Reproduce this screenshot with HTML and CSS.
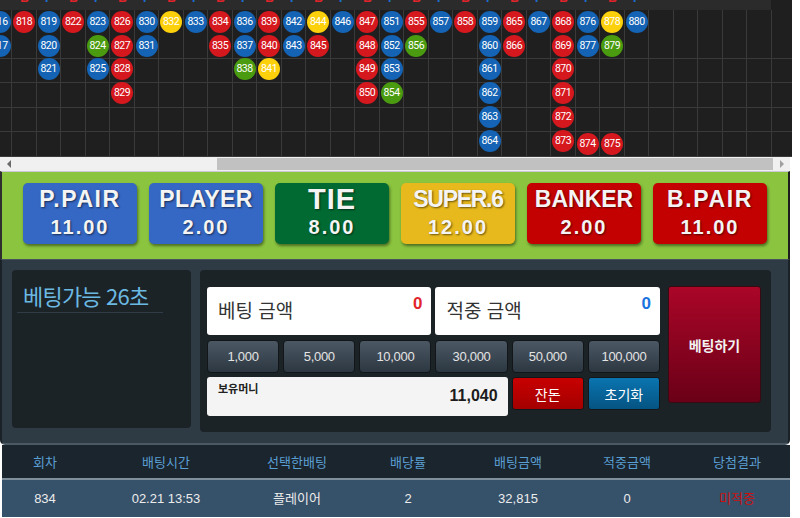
FILE: index.html
```html
<!DOCTYPE html>
<html lang="ko">
<head>
<meta charset="utf-8">
<link rel="stylesheet" href="styles.css">
</head>
<body>
<div class="app">
  <div class="road">
    <div class="strip">
      <div class="strip-inner">
        <span></span><span class="mr">B</span><span class="mb">P</span><span class="mr">B</span><span class="mb">P</span><span class="mr">B</span><span class="mb">P</span><span class="mr">B</span><span class="mb">P</span><span class="mr">B</span><span class="mb">P</span><span class="mr">B</span><span class="mb">P</span><span class="mr">B</span><span class="mb">P</span><span class="mr">B</span><span class="mb">P</span><span class="mr">B</span><span class="mb">P</span><span class="mr">B</span><span class="mb">P</span><span class="mr">B</span><span class="mb">P</span><span class="mr">B</span><span class="mb">P</span><span class="mr">B</span><span class="mb">P</span>
      </div>
    </div>
    <div class="cols">
      <div class="col"><i class="b bl">816</i><i class="b bl">817</i></div>
      <div class="col"><i class="b rd">818</i></div>
      <div class="col"><i class="b bl">819</i><i class="b bl">820</i><i class="b bl">821</i></div>
      <div class="col"><i class="b rd">822</i></div>
      <div class="col"><i class="b bl">823</i><i class="b gr">824</i><i class="b bl">825</i></div>
      <div class="col"><i class="b rd">826</i><i class="b rd">827</i><i class="b rd">828</i><i class="b rd">829</i></div>
      <div class="col"><i class="b bl">830</i><i class="b bl">831</i></div>
      <div class="col"><i class="b yl">832</i></div>
      <div class="col"><i class="b bl">833</i></div>
      <div class="col"><i class="b rd">834</i><i class="b rd">835</i></div>
      <div class="col"><i class="b bl">836</i><i class="b bl">837</i><i class="b gr">838</i></div>
      <div class="col"><i class="b rd">839</i><i class="b rd">840</i><i class="b yl">841</i></div>
      <div class="col"><i class="b bl">842</i><i class="b bl">843</i></div>
      <div class="col"><i class="b yl">844</i><i class="b rd">845</i></div>
      <div class="col"><i class="b bl">846</i></div>
      <div class="col"><i class="b rd">847</i><i class="b rd">848</i><i class="b rd">849</i><i class="b rd">850</i></div>
      <div class="col"><i class="b bl">851</i><i class="b bl">852</i><i class="b bl">853</i><i class="b gr">854</i></div>
      <div class="col"><i class="b rd">855</i><i class="b gr">856</i></div>
      <div class="col"><i class="b bl">857</i></div>
      <div class="col"><i class="b rd">858</i></div>
      <div class="col"><i class="b bl">859</i><i class="b bl">860</i><i class="b bl">861</i><i class="b bl">862</i><i class="b bl">863</i><i class="b bl">864</i></div>
      <div class="col"><i class="b rd">865</i><i class="b rd">866</i></div>
      <div class="col"><i class="b bl">867</i></div>
      <div class="col"><i class="b rd">868</i><i class="b rd">869</i><i class="b rd">870</i><i class="b rd">871</i><i class="b rd">872</i><i class="b rd">873</i></div>
      <div class="col"><i class="b bl">876</i><i class="b bl">877</i><i class="e"></i><i class="e"></i><i class="e"></i><i class="b rd">874</i></div>
      <div class="col"><i class="b yl">878</i><i class="b gr">879</i><i class="e"></i><i class="e"></i><i class="e"></i><i class="b rd">875</i></div>
      <div class="col"><i class="b bl">880</i></div>
      <div class="col"></div>
      <div class="col"></div>
      <div class="col"></div>
      <div class="col"></div>
      <div class="col"></div>
      <div class="col"></div>
    </div>
  </div>
  <div class="hscroll">
    <div class="arrow"><span class="tri-l"></span></div>
    <div class="track"><div class="thumb"></div></div>
    <div class="arrow"><span class="tri-r"></span></div>
  </div>

  <div class="bets">
    <div class="bet c-blue"><div class="name wide">P.PAIR</div><div class="odd">11.00</div></div>
    <div class="bet c-blue"><div class="name mid">PLAYER</div><div class="odd">2.00</div></div>
    <div class="bet c-green tie"><div class="name">TIE</div><div class="odd">8.00</div></div>
    <div class="bet c-yellow"><div class="name narrow">SUPER.6</div><div class="odd">12.00</div></div>
    <div class="bet c-red"><div class="name">BANKER</div><div class="odd">2.00</div></div>
    <div class="bet c-red"><div class="name wide">B.PAIR</div><div class="odd">11.00</div></div>
  </div>

  <div class="console">
    <div class="timer">
      <div class="timer-text">베팅가능 26초</div>
    </div>
    <div class="betbox">
      <div class="form">
        <div class="field span3"><span class="flabel">베팅 금액</span><span class="fval red">0</span></div>
        <div class="field span3"><span class="flabel">적중 금액</span><span class="fval blue">0</span></div>
        <button class="chip">1,000</button>
        <button class="chip">5,000</button>
        <button class="chip">10,000</button>
        <button class="chip">30,000</button>
        <button class="chip">50,000</button>
        <button class="chip">100,000</button>
        <div class="money span4"><span class="mlabel">보유머니</span><span class="mval">11,040</span></div>
        <button class="act act-red">잔돈</button>
        <button class="act act-blue">초기화</button>
      </div>
      <button class="go">베팅하기</button>
    </div>
  </div>

  <div class="history">
    <div class="hrow head">
      <span>회차</span><span>배팅시간</span><span>선택한배팅</span><span>배당률</span><span>배팅금액</span><span>적중금액</span><span>당첨결과</span>
    </div>
    <div class="hrow data">
      <span>834</span><span>02.21 13:53</span><span>플레이어</span><span>2</span><span>32,815</span><span>0</span><span class="miss">미적중</span>
    </div>
  </div>
</div>
</body>
</html>
```
FILE: styles.css
```css
* { box-sizing: border-box; }
body {
  margin: 0;
  background: #ffffff;
  font-family: "Liberation Sans", "Noto Sans CJK KR", sans-serif;
}
.app { width: 790px; }

/* bead road */
.road {
  width: 792px;
  height: 157px;
  background: #1f1f1f;
  overflow: hidden;
}
.strip {
  width: 771px;
  height: 10px;
  background: #2b2b2b;
  overflow: hidden;
}
.strip-inner {
  display: flex;
  margin-left: -12.25px;
}
.strip-inner span {
  flex: 0 0 24.5px;
  text-align: center;
  font: bold 12px/12px "Liberation Sans", sans-serif;
  margin-top: -8px;
}
.mr { color: #e0242a; }
.mb { color: #1d6fd2; }
.cols {
  display: flex;
  margin-left: -12.25px;
  height: 147px;
}
.col {
  flex: 0 0 24.5px;
  border-right: 1px solid #3a3a3a;
  background: repeating-linear-gradient(to bottom, #1f1f1f 0 23.5px, #3a3a3a 23.5px 24.5px);
}
.b, .e { display: block; font-style: normal; }
.e { height: 24.5px; }
.b {
  width: 22px;
  height: 22px;
  margin: 0.75px auto 1.75px;
  border-radius: 50%;
  color: #fff;
  font: 10.5px/22px "Roboto", "Liberation Sans", sans-serif;
  letter-spacing: -0.5px;
  text-align: center;
}
.rd { background: #d5181e; }
.bl { background: #1463b4; }
.yl { background: #fdd00c; }
.gr { background: #4b9b10; }

/* scrollbar */
.hscroll {
  width: 790px;
  height: 14px;
  background: #f0f0f0;
  display: flex;
  align-items: center;
}
.arrow {
  flex: 0 0 17px;
  display: flex;
  justify-content: center;
  align-items: center;
}
.tri-l {
  width: 0; height: 0;
  border-top: 4px solid transparent;
  border-bottom: 4px solid transparent;
  border-right: 4px solid #6a6a6a;
}
.tri-r {
  width: 0; height: 0;
  border-top: 4px solid transparent;
  border-bottom: 4px solid transparent;
  border-left: 4px solid #a0a0a0;
}
.track { flex: 1; height: 12px; padding-left: 200px; }
.thumb { height: 12px; background: #c1c1c1; }

/* bet buttons */
.bets {
  height: 88px;
  background: #8bc53f;
  border-top: 1px solid #c9c9d8;
  border-left: 2px solid #2e2e2e;
  border-right: 2px solid #1e1e1e;
  display: flex;
  gap: 12px;
  padding: 11px 0 0 21px;
}
.bet {
  width: 114px;
  height: 61px;
  border-radius: 5px;
  box-shadow: 1px 2px 3px rgba(0, 0, 0, 0.45);
  display: flex;
  flex-direction: column;
  align-items: center;
  color: #f4f4f4;
  text-shadow: 1px 1px 2px rgba(0, 0, 0, 0.55);
}
.c-blue { background: #3567c4; }
.c-green { background: #006a32; }
.c-yellow { background: #e7b91c; }
.c-red { background: #c40101; }
.bet .name {
  font: bold 23px/22px "Liberation Sans", sans-serif;
  margin-top: 5px;
  letter-spacing: 0;
}
.bet .name.wide { letter-spacing: 1.6px; }
.bet .name.mid { letter-spacing: 0.4px; }
.bet .name.narrow { letter-spacing: -1.3px; }
.bet .odd {
  font: bold 20px/20px "Liberation Sans", sans-serif;
  letter-spacing: 2px;
  margin-top: 7px;
}
.tie .name { font-size: 29px; line-height: 28px; margin-top: 2px; letter-spacing: 1px; }
.tie .odd { margin-top: 4px; }

/* console */
.console {
  height: 186px;
  background: #2e3a44;
  border-left: 2px solid #1b2227;
  border-right: 2px solid #1b2227;
  border-top: 1px solid #47525c;
  border-bottom: 2px solid #4b5965;
  border-radius: 0 0 5px 5px;
  padding: 10px 17px 0 10px;
  display: flex;
  gap: 9px;
}
.timer {
  width: 179px;
  height: 158px;
  background: #1c2327;
  border-radius: 4px;
  padding: 12px 28px 0 5px;
}
.timer-text {
  color: #6bb9e2;
  font: 22px/26px "Noto Sans CJK KR", sans-serif;
  padding: 0 0 4px 6px;
  border-bottom: 1px solid #2f3b45;
  letter-spacing: -0.8px;
}
.betbox {
  flex: 1;
  height: 162px;
  background: #1c2327;
  border-radius: 4px;
  padding: 16px 10px 0 7px;
  display: flex;
  gap: 8px;
}
.form {
  width: 453px;
  margin-top: 1px;
  display: grid;
  grid-template-columns: repeat(6, 1fr);
  grid-template-rows: 48px 33px 39px;
  column-gap: 4px;
  row-gap: 4.5px;
  align-items: start;
}
.span3 { grid-column: span 3; }
.span4 { grid-column: span 4; }
.field {
  height: 48px;
  background: #fff;
  border-radius: 3px;
  position: relative;
  display: flex;
  align-items: center;
  padding-left: 11px;
}
.flabel {
  color: #333;
  font: 19px/1 "Noto Sans CJK KR", sans-serif;
  margin-top: -3px;
}
.fval {
  position: absolute;
  right: 9px;
  top: 8px;
  font: bold 17px/1 "Liberation Sans", sans-serif;
}
.fval.red { color: #e2262b; }
.fval.blue { color: #1b73e0; }
.chip {
  height: 33px;
  border: 1px solid #121619;
  border-radius: 4px;
  background: linear-gradient(#4b5864, #2c3741);
  color: #e4e4e4;
  font: 13px/1 "Liberation Sans", sans-serif;
  letter-spacing: -0.3px;
  padding: 0;
}
.money {
  height: 39px;
  background: #f4f4f4;
  border-radius: 3px;
  position: relative;
  padding: 6px 10px 0 11px;
  display: flex;
  justify-content: space-between;
}
.mlabel {
  font: bold 11px/1 "Noto Sans CJK KR", sans-serif;
  color: #222;
}
.mval {
  font: bold 16px/1 "Liberation Sans", sans-serif;
  color: #1c1c1c;
  margin-top: 5px;
}
.act {
  height: 33px;
  border: 1px solid #11161a;
  border-radius: 3px;
  color: #fff;
  font: 14px/1 "Noto Sans CJK KR", sans-serif;
  padding: 0;
}
.act-red { background: linear-gradient(#c80000, #a40000); }
.act-blue { background: linear-gradient(#0a74b0, #055482); }
.go {
  width: 93px;
  height: 117px;
  border: 1px solid #3a0a12;
  border-radius: 3px;
  background: linear-gradient(#aa0628, #6a0017);
  color: #f2f2f2;
  font: bold 14px/1 "Noto Sans CJK KR", sans-serif;
  padding: 0;
  margin-top: 0;
}

/* history table */
.history { margin-left: 2px; width: 788px; }
.hrow {
  display: grid;
  grid-template-columns: 86px 156px 106px 116px 104px 114px 1fr;
  align-items: center;
}
.hrow span { text-align: center; }
.head {
  height: 35px;
  background: #1a252e;
  color: #5a9fd3;
  font: 13px/1 "Noto Sans CJK KR", sans-serif;
  border-bottom: 2px solid #7f8f9c;
}
.data {
  height: 37px;
  background: #36516a;
  color: #ececec;
  font: 13px/1 "Liberation Sans", "Noto Sans CJK KR", sans-serif;
}
.miss { color: #cc1010; }
```
